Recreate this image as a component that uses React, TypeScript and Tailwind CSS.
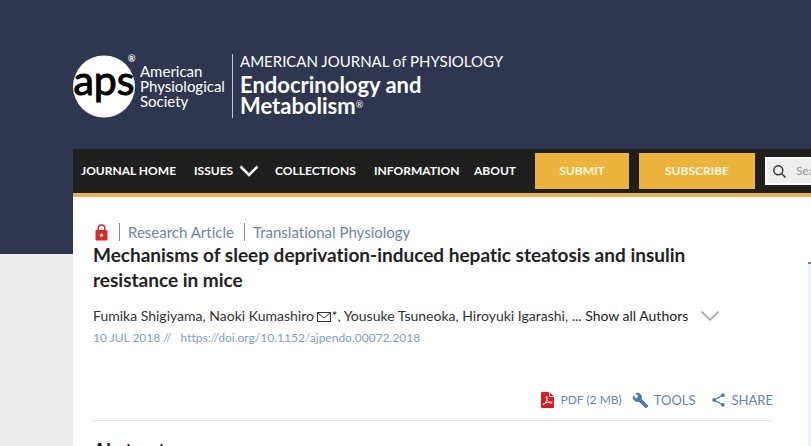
import React, { useState } from 'react';

const Chevron: React.FC<{ className: string; strokeWidth: number }> = ({ className, strokeWidth }) => (
    <svg viewBox="0 0 20 12" fill="none" stroke="currentColor" strokeWidth={strokeWidth} className={className} aria-hidden="true">
        <path d="M1.5 1.5 L10 10 L18.5 1.5" />
    </svg>
);

const LockIcon = () => (
    <svg viewBox="0 0 13 17" className="w-[13px] h-[17px] shrink-0" aria-label="Restricted access">
        <path d="M3.2 7V4.2a3.3 3.3 0 0 1 6.6 0V7" fill="none" stroke="#d9292b" strokeWidth="1.5" />
        <rect x="0.5" y="6" width="12" height="10.5" rx="1.3" fill="#d9292b" />
        <circle cx="6.5" cy="11.2" r="1.6" fill="#fff" />
    </svg>
);

const MailIcon = () => (
    <svg viewBox="0 0 14 10" className="w-[14px] h-[10px] inline-block" fill="none" stroke="#333" aria-label="Corresponding author">
        <rect x="0.5" y="0.5" width="13" height="9" />
        <path d="M0.8 1 L7 6 L13.2 1" />
    </svg>
);

const PdfIcon = () => (
    <svg viewBox="0 0 13 16" className="w-[13px] h-4 shrink-0" aria-hidden="true">
        <path d="M1.2 0H8.5L13 4.5V14.8Q13 16 11.8 16H1.2Q0 16 0 14.8V1.2Q0 0 1.2 0Z" fill="#e0191f" />
        <path d="M8.5 0V4.5H13" fill="none" stroke="#fff" strokeWidth="0.9" />
        <path d="M2 12.8C4.4 12 6.3 8.2 6.1 5C6 3.8 5 4 5.1 5.1C5.3 8 7.8 11.2 10.3 11.3C11.5 11.3 11.3 10.1 10.1 10C7.6 9.8 4.6 10.7 2.6 12C1.8 12.6 1.7 13.1 2 12.8Z" fill="none" stroke="#fff" strokeWidth="0.9" />
    </svg>
);

const ToolsIcon = () => (
    <svg viewBox="0 0 24 24" className="w-[17px] h-[17px] shrink-0" fill="#5078ab" aria-hidden="true">
        <path d="M22.7 19l-9.1-9.1c.9-2.3.4-5-1.5-6.9-2-2-5-2.4-7.4-1.3L9 6 6 9 1.6 4.7C.4 7.1.9 10.1 2.9 12.1c1.9 1.9 4.6 2.4 6.9 1.5l9.1 9.1c.4.4 1 .4 1.4 0l2.3-2.3c.5-.4.5-1.1.1-1.4z" />
    </svg>
);

const ShareIcon = () => (
    <svg viewBox="0 0 13 14" className="w-[13px] h-[14px] shrink-0" fill="#5078ab" aria-hidden="true">
        <path d="M11 2 L2 7 L11 12" fill="none" stroke="#5078ab" strokeWidth="1.3" />
        <circle cx="10.8" cy="2.2" r="1.9" />
        <circle cx="2.2" cy="7" r="1.9" />
        <circle cx="10.8" cy="11.8" r="1.9" />
    </svg>
);

const Header = () => (
    <header className="flex h-[149px] pt-[54px] pl-[73px] text-white">
        <a href="#" className="flex shrink-0">
            <svg viewBox="0 0 64 64" className="w-16 h-16 shrink-0 overflow-visible" aria-label="aps">
                <circle cx="31" cy="32.5" r="31" fill="#fff" />
                <text x="31" y="41" textAnchor="middle" fontFamily="Lato, sans-serif" fontSize="41" fill="#000" stroke="#000" strokeWidth="1">aps</text>
                <text x="55" y="8" fontFamily="Lato, sans-serif" fontSize="9" fontWeight="700" fill="#fff">®</text>
            </svg>
            <span className="w-[95px] pl-[3px] pt-[10px] text-[15px] leading-[15px]">
                American<br />Physiological<br />Society
            </span>
        </a>
        <div className="h-16 border-l border-[#c5c8d2] pl-[7px]">
            <p className="text-[15px] leading-[15px]">AMERICAN JOURNAL of PHYSIOLOGY</p>
            <h2 className="pt-[5px] text-[22px] leading-[21px] font-bold">
                Endocrinology and<br />Metabolism<span className="align-[6px] text-[9px] leading-none font-normal">®</span>
            </h2>
        </div>
    </header>
);

const NavBar = () => {
    const [query, setQuery] = useState('');
    const buttonClass = "h-9 shrink-0 bg-[#ecb43c] font-bold text-[#fff8e5]";

    return (
        <nav className="ml-[73px] flex h-12 items-center border-b-4 border-[#e8b04a] bg-[#1f1f1f] pl-2 text-[12px] font-bold text-white whitespace-nowrap">
            <a href="#" className="w-[113px] shrink-0">JOURNAL HOME</a>
            <a href="#" className="flex w-[81px] shrink-0 items-center gap-[6px]">
                ISSUES <Chevron className="w-5 h-3" strokeWidth={2.5} />
            </a>
            <a href="#" className="w-[99px] shrink-0">COLLECTIONS</a>
            <a href="#" className="w-[100px] shrink-0">INFORMATION</a>
            <a href="#" className="w-[61px] shrink-0">ABOUT</a>
            <button className={`${buttonClass} w-[94px]`}>SUBMIT</button>
            <button className={`${buttonClass} ml-[10px] w-[116px]`}>SUBSCRIBE</button>
            <label className="ml-[10px] flex h-7 w-[240px] shrink-0 items-center border-2 border-white bg-[#eee] pl-[6px]">
                <svg viewBox="0 0 13 13" className="w-[13px] h-[13px] shrink-0" fill="none" stroke="#333" strokeWidth="1.4" aria-label="Search">
                    <circle cx="5.3" cy="5.3" r="4.5" />
                    <path d="M8.6 8.6 L12.5 12.5" />
                </svg>
                <input
                    type="search"
                    value={query}
                    onChange={e => setQuery(e.target.value)}
                    placeholder="Search"
                    className="ml-[10px] w-full bg-transparent text-[12px] font-normal text-gray-700 outline-none placeholder:text-[#999]"
                />
            </label>
        </nav>
    );
};

const Article = () => (
    <main className="min-w-0 flex-1 bg-white pt-[25px] pl-5 pr-[35px]">
        <div className="flex h-5 items-center text-[15px] leading-[18px] text-[#6b86b0]">
            <span className="w-[26px] pl-[2px]"><LockIcon /></span>
            <a href="#" className="w-[125px] border-l border-[#888] pl-2">Research Article</a>
            <a href="#" className="border-l border-[#888] pl-2">Translational Physiology</a>
        </div>
        <h1 className="text-[19px] leading-[25px] font-bold text-[#222]">
            Mechanisms of sleep deprivation-induced hepatic steatosis and insulin resistance in mice
        </h1>
        <div className="mt-[13px] flex items-center whitespace-nowrap text-[14px] leading-[22px] text-[#333]">
            <p>
                Fumika Shigiyama, Naoki Kumashiro <MailIcon />*, Yousuke Tsuneoka, Hiroyuki Igarashi, ... <a href="#" className="text-[#222]">Show all Authors</a>
            </p>
            <button className="ml-3" aria-label="Show all authors">
                <Chevron className="w-5 h-3 text-[#999]" strokeWidth={1.5} />
            </button>
        </div>
        <p className="text-[12px] leading-[22px] text-[#7f9fc4]">
            10 JUL 2018 // <a href="#" className="ml-[6px]">https://doi.org/10.1152/ajpendo.00072.2018</a>
        </p>
        <div className="mt-[41px] flex h-[31px] items-start justify-end gap-[10px] border-b border-[#e6e6e6] text-[13px] leading-5 text-[#6883ae]">
            <a href="#" className="flex items-center gap-[6px] text-[12px] leading-5"><PdfIcon />PDF (2 MB)</a>
            <button className="flex items-center gap-[5px]"><ToolsIcon />TOOLS</button>
            <button className="ml-[6px] flex items-center gap-[7px]"><ShareIcon />SHARE</button>
        </div>
        <h2 className="mt-[15px] text-[19px] leading-[28px] font-bold text-[#222]">Abstract</h2>
    </main>
);

const App: React.FC = () => {
    return (
        <div className="h-screen overflow-hidden bg-[linear-gradient(#2f3650_254px,#ededed_254px)] font-['Lato','Open_Sans',sans-serif] [font-variant-ligatures:none]">
            <Header />
            <NavBar />
            <div className="ml-[73px] flex h-full">
                <Article />
                <aside className="w-[3px] shrink-0 bg-white pt-[65px]">
                    <div className="h-full border-t-2 border-[#6b82b3] bg-[#eef1f8]" />
                </aside>
            </div>
        </div>
    );
};

export default App;
